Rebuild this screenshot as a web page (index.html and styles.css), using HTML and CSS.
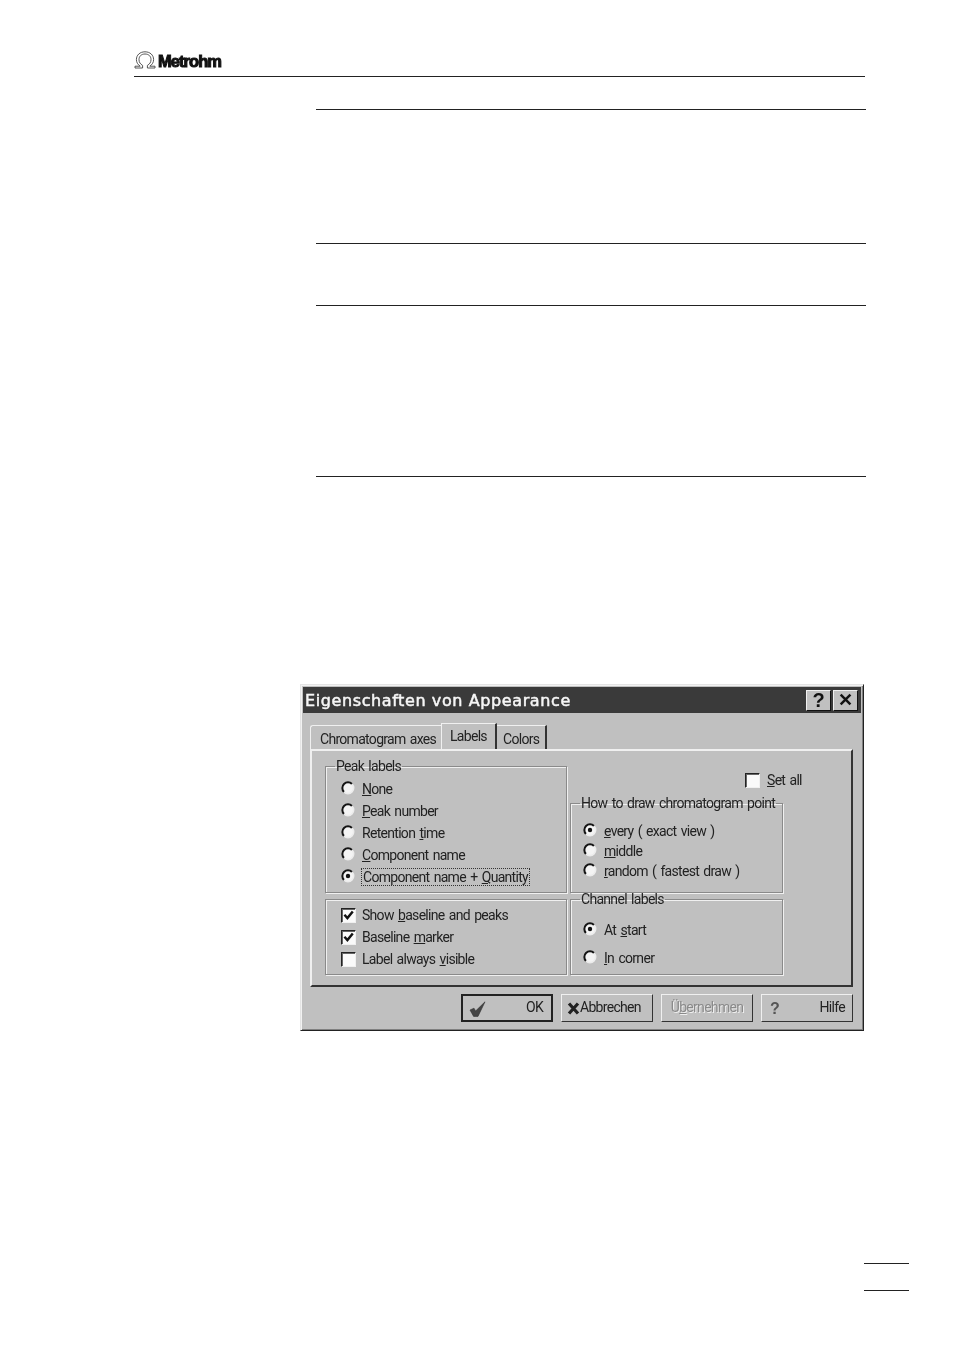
FILE: index.html
```html
<!DOCTYPE html>
<html lang="en">
<head>
<meta charset="utf-8">
<title>Eigenschaften von Appearance</title>
<link rel="stylesheet" href="styles.css">
</head>
<body>
<svg class="defs" width="0" height="0" aria-hidden="true">
  <symbol id="radio" viewBox="0 0 14 14">
    <circle cx="7" cy="7" r="5.6" fill="#f4f4f4"/>
    <path d="M11 3A5.6 5.6 0 0 0 3 11" fill="none" stroke="#151515" stroke-width="2"/>
    <path d="M3 11A5.6 5.6 0 0 0 11 3" fill="none" stroke="#ececec" stroke-width="1.6"/>
  </symbol>
  <symbol id="radio-on" viewBox="0 0 14 14">
    <circle cx="7" cy="7" r="5.6" fill="#f4f4f4"/>
    <path d="M11 3A5.6 5.6 0 0 0 3 11" fill="none" stroke="#151515" stroke-width="2"/>
    <path d="M3 11A5.6 5.6 0 0 0 11 3" fill="none" stroke="#ececec" stroke-width="1.6"/>
    <circle cx="7" cy="7" r="2.2" fill="#111"/>
  </symbol>
  <symbol id="tick" viewBox="0 0 14 14">
    <path d="M2.6 6.2L5.8 9.8L11.6 2.6" fill="none" stroke="#111" stroke-width="2.6"/>
  </symbol>
</svg>

<header class="page-head">
  <svg class="omega" viewBox="0 0 22 18" aria-hidden="true">
    <path d="M1 17V15.2H6.2C3.8 13.6 2.4 11.4 2.4 8.6C2.4 4 6 .8 11 .8S19.6 4 19.6 8.6C19.6 11.4 18.2 13.6 15.8 15.2H21V17H13.4V14.4C15.8 13 17 11.2 17 8.6C17 5.2 14.6 3 11 3S5 5.2 5 8.6C5 11.2 6.2 13 8.6 14.4V17Z" fill="#fff" stroke="#444" stroke-width="0.9"/>
  </svg>
  <span class="brand">Metrohm</span>
</header>

<div class="rules">
  <hr class="rule r1"><hr class="rule r2"><hr class="rule r3"><hr class="rule r4">
</div>

<section class="dialog">
  <div class="titlebar">
    <span class="title">Eigenschaften von Appearance</span>
    <span class="cap cap-help">?</span>
    <span class="cap cap-close">✕</span>
  </div>

  <div class="tabs">
    <span class="tab tab-first">Chromatogram axes</span>
    <span class="tab tab-active">Labels</span>
    <span class="tab tab-last">Colors</span>
  </div>

  <div class="panel">
    <fieldset class="group peak">
      <legend>Peak labels</legend>
      <div class="opt"><svg class="radio"><use href="#radio"/></svg><span><u>N</u>one</span></div>
      <div class="opt"><svg class="radio"><use href="#radio"/></svg><span><u>P</u>eak number</span></div>
      <div class="opt"><svg class="radio"><use href="#radio"/></svg><span>Retention <u>t</u>ime</span></div>
      <div class="opt"><svg class="radio"><use href="#radio"/></svg><span><u>C</u>omponent name</span></div>
      <div class="opt"><svg class="radio"><use href="#radio-on"/></svg><span class="focus">Component name + <u>Q</u>uantity</span></div>
    </fieldset>

    <div class="right-top">
      <div class="setall"><span class="box"></span><span><u>S</u>et all</span></div>
      <fieldset class="group draw">
        <legend>How to draw chromatogram point</legend>
        <div class="opt"><svg class="radio"><use href="#radio-on"/></svg><span><u>e</u>very ( exact view )</span></div>
        <div class="opt"><svg class="radio"><use href="#radio"/></svg><span><u>m</u>iddle</span></div>
        <div class="opt"><svg class="radio"><use href="#radio"/></svg><span><u>r</u>andom ( fastest draw )</span></div>
      </fieldset>
    </div>

    <div class="group checks">
      <div class="opt"><span class="box"><svg class="tick"><use href="#tick"/></svg></span><span>Show <u>b</u>aseline and peaks</span></div>
      <div class="opt"><span class="box"><svg class="tick"><use href="#tick"/></svg></span><span>Baseline <u>m</u>arker</span></div>
      <div class="opt"><span class="box"></span><span>Label always <u>v</u>isible</span></div>
    </div>

    <fieldset class="group channel">
      <legend>Channel labels</legend>
      <div class="opt"><svg class="radio"><use href="#radio-on"/></svg><span>At <u>s</u>tart</span></div>
      <div class="opt"><svg class="radio"><use href="#radio"/></svg><span><u>I</u>n corner</span></div>
    </fieldset>
  </div>

  <div class="buttons">
    <div class="btn btn-ok">
      <svg class="btn-icon" viewBox="0 0 18 16" aria-hidden="true"><path d="M1 9L5 7.2L6.6 10L16 .8L9 15.4H4.6Z" fill="#444" stroke="#333" stroke-width="0.6"/></svg>
      <span>OK</span>
    </div>
    <div class="btn btn-cancel">
      <svg class="x-icon" viewBox="0 0 13 13" aria-hidden="true"><path d="M2 1.5L11 11.5M11 1.5L2 11.5" stroke="#222" stroke-width="3.2"/></svg>
      <span>Abbrechen</span>
    </div>
    <div class="btn btn-apply"><span>Ü<u>b</u>ernehmen</span></div>
    <div class="btn btn-help"><span class="q">?</span><span>Hilfe</span></div>
  </div>
</section>

<footer class="page-foot"><hr class="short"><hr class="short"></footer>
</body>
</html>
```
FILE: styles.css
```css
html, body { margin: 0; padding: 0; background: #fff; }
body { width: 954px; height: 1350px; overflow: hidden; font-family: Roboto, "Liberation Sans", Arial, sans-serif; color: #222; }
.defs { display: block; height: 0; }

.page-head { margin-left: 134px; width: 731px; height: 64px; padding: 6px 0; border-bottom: 1px solid #222; display: flex; align-items: flex-end; }
.omega { width: 22px; height: 18px; margin: 0 2px 1px 0; filter: blur(0.3px); }
.brand { font-family: "Liberation Sans", sans-serif; font-size: 16.5px; font-weight: 700; line-height: 18px; letter-spacing: -0.95px; -webkit-text-stroke: 1px #111; color: #111; filter: blur(0.3px); }

.rules { margin-left: 316px; width: 550px; }
.rule { margin: 0; border: 0; border-top: 1px solid #222; height: 0; }
.r1 { margin-top: 32px; }
.r2 { margin-top: 133px; }
.r3 { margin-top: 61px; }
.r4 { margin-top: 170px; }

.dialog { margin: 207px 0 0 300px; width: 564px; height: 347px; box-sizing: border-box; background: #c0c0c0; border: 1px solid #222; border-top-color: #e4e4e4; border-left-color: #e4e4e4; padding: 2px; box-shadow: inset 1px 1px 0 #f2f2f2, inset -1px -1px 0 #808080; font-size: 14px; line-height: 16px; letter-spacing: -0.7px; word-spacing: 1.5px; filter: blur(0.35px); }
.titlebar { height: 26px; background: #3a3a3a; display: flex; align-items: center; padding: 0 3px 0 2px; }
.title { flex: 1; color: #f6f6f6; font-family: "DejaVu Sans", sans-serif; font-size: 16px; line-height: 18px; padding-top: 2px; letter-spacing: 0.6px; word-spacing: 0; -webkit-text-stroke: 0.5px #f6f6f6; white-space: nowrap; }
.cap { width: 25px; height: 21px; margin-left: 2px; background: #c0c0c0; box-sizing: border-box; border: 1px solid; border-color: #f0f0f0 #111 #111 #f0f0f0; display: flex; align-items: center; justify-content: center; color: #111; font-family: "Liberation Sans", sans-serif; font-weight: 700; font-size: 20px; letter-spacing: 0; }
.cap-close { font-size: 18px; }

.tabs { display: flex; align-items: flex-end; height: 36px; padding-left: 7px; }
.tab { box-sizing: border-box; height: 24px; padding: 5px 6px 0 9px; background: #c0c0c0; border-top: 1px solid #f0f0f0; border-right: 2px solid #333; white-space: nowrap; }
.tab-first { width: 132px; border-left: 1px solid #f0f0f0; border-right: 0; border-radius: 3px 0 0 0; box-shadow: 0 1px 0 #f0f0f0; }
.tab-active { width: 56px; height: 26px; padding: 4px 0 0 8px; margin-left: -1px; position: relative; border-left: 1px solid #f0f0f0; z-index: 1; }
.tab-last { width: 50px; padding: 5px 0 0 6px; box-shadow: 0 1px 0 #f0f0f0; }

.panel { margin-left: 7px; width: 543px; height: 238px; box-sizing: border-box; border: 2px solid; border-color: #f0f0f0 #333 #333 #f0f0f0; padding: 15px 0 0 13px; display: grid; grid-template-columns: 242px 213px; grid-template-rows: 127px 76px; column-gap: 3px; row-gap: 6px; }

.group { margin: 0; padding: 0; border: 1px solid #8a8a8a; box-shadow: 1px 1px 0 #f0f0f0, inset 1px 1px 0 #f0f0f0; min-width: 0; box-sizing: border-box; }
fieldset.group { margin-top: -7px; }
fieldset.group legend { padding: 0 1px; margin-left: 9px; line-height: 14px; white-space: nowrap; }
.opt { display: flex; align-items: center; height: 22px; padding-left: 15px; white-space: nowrap; }
.opt > span:last-child { margin-left: 7px; }
.opt > .box + span { margin-left: 6px; }
.radio { width: 14px; height: 14px; flex: none; margin-top: -2px; }
.box { width: 15px; height: 15px; flex: none; box-sizing: border-box; background: #fafafa; border: 1px solid; border-color: #222 #f0f0f0 #f0f0f0 #222; box-shadow: inset 1px 1px 0 #666; display: flex; align-items: center; justify-content: center; }
.tick { width: 13px; height: 13px; }
.opt > .focus { outline: 1px dotted #333; padding: 0 1px; margin-left: 5px; }

.peak { padding-top: 5px; }
.right-top { display: flex; flex-direction: column; }
.setall { height: 30px; flex: none; display: flex; align-items: flex-start; padding: 7px 0 0 175px; white-space: nowrap; }
.setall .box { margin-right: 7px; }
.setall span:last-child { line-height: 15px; }
.draw { height: 97px; flex: none; padding-top: 11px; }
.draw .opt { height: 20px; padding-left: 12px; }
.checks { padding-top: 4px; }
.channel { padding-top: 10px; }
.channel .opt { height: 28px; padding-left: 12px; }

.buttons { display: flex; gap: 8px; padding: 7px 0 0 158px; }
.btn { box-sizing: border-box; width: 92px; height: 28px; border: 1px solid; border-color: #f0f0f0 #333 #333 #f0f0f0; background: #c0c0c0; display: flex; align-items: center; justify-content: space-between; padding: 0 7px 2px 6px; }
.btn-ok { border: 2px solid #222; padding-right: 8px; }
.btn-icon { width: 18px; height: 16px; margin-top: 3px; }
.x-icon { width: 13px; height: 13px; flex: none; margin-top: 2px; }
.btn-cancel { padding: 0 0 2px 5px; justify-content: flex-start; }
.btn-apply { justify-content: center; padding: 0 0 2px; color: #8a8a8a; text-shadow: 1px 1px 0 #efefef; }
.btn-help .q { font-family: "Liberation Sans", sans-serif; font-weight: 700; color: #555; font-size: 16px; margin: 3px 0 0 2px; }

.page-foot { margin: 232px 0 0 864px; width: 45px; }
.short { margin: 0 0 26px; border: 0; border-top: 1px solid #222; height: 0; }
```
